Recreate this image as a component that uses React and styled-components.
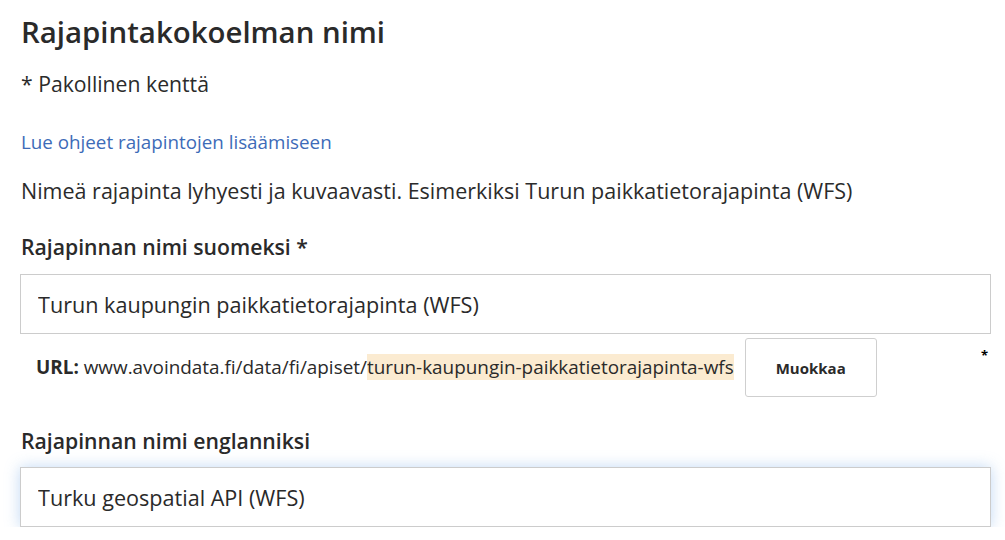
import React from "react";
import styled, { createGlobalStyle } from "styled-components";

const GlobalStyle = createGlobalStyle`
  html, body {
    margin: 0;
    padding: 0;
    background: #FFFFFF;
  }
  body {
    font-family: "Open Sans", Lato, Arial, sans-serif;
    color: #2b2b2b;
  }
`;

const Page = styled.div`
  width: 971px;
  padding: 0 0 0 20px;
  display: flex;
  flex-direction: column;
`;

const Title = styled.h1`
  margin: 13px 0 0 1px;
  font-size: 29.4px;
  line-height: 38px;
  font-weight: 600;
  color: #2a2a2a;
`;

const Required = styled.p`
  margin: 20px 0 0 1px;
  font-size: 21.2px;
  line-height: 26px;
`;

const GuideLink = styled.a`
  margin: 33px 0 0 1px;
  font-size: 18.8px;
  line-height: 24px;
  color: #3d6bb8;
  text-decoration: none;
`;

const Hint = styled.p`
  margin: 24px 0 0 1px;
  font-size: 21.5px;
  line-height: 26px;
`;

const Field = styled.div`
  display: flex;
  flex-direction: column;
  margin-top: ${props => props.top}px;
`;

const Label = styled.label`
  margin-left: 1px;
  font-size: 21.2px;
  line-height: 26px;
  font-weight: 600;
  color: #2a2a2a;
`;

const Input = styled.input`
  box-sizing: border-box;
  margin-top: ${props => props.gap}px;
  width: 971px;
  height: 60px;
  padding: 0 17px;
  border: 1px solid #cccccc;
  border-radius: 0;
  background: #FFFFFF;
  font-family: inherit;
  font-size: 21.6px;
  color: #2a2a2a;
  outline: none;
  box-shadow: ${props => props.focused ? "0 0 14px rgba(120, 170, 230, 0.45)" : "none"};
`;

const UrlRow = styled.div`
  display: flex;
  align-items: flex-start;
  margin-top: 4px;
  padding-left: 16px;
`;

const UrlText = styled.div`
  align-self: center;
  font-size: 18.9px;
  line-height: 27px;
  color: #2a2a2a;
  b {
    font-weight: 700;
  }
`;

const Slug = styled.span`
  background: #fbebd1;
`;

const EditButton = styled.button`
  box-sizing: border-box;
  margin-left: 11px;
  width: 132px;
  height: 59px;
  border: 1px solid #cfcfcf;
  border-radius: 3px;
  background: #FFFFFF;
  font-family: inherit;
  font-size: 15px;
  font-weight: 700;
  color: #2a2a2a;
`;

const Star = styled.span`
  margin-left: auto;
  margin-top: 8px;
  margin-right: 3px;
  font-size: 13px;
  font-weight: 700;
  color: #000000;
`;

export default function App() {
  return (
    <Page>
      <GlobalStyle />
      <Title>Rajapintakokoelman nimi</Title>
      <Required>* Pakollinen kenttä</Required>
      <GuideLink href="#">Lue ohjeet rajapintojen lisäämiseen</GuideLink>
      <Hint>Nimeä rajapinta lyhyesti ja kuvaavasti. Esimerkiksi Turun paikkatietorajapinta (WFS)</Hint>
      <Field top={30}>
        <Label>Rajapinnan nimi suomeksi *</Label>
        <Input gap={14} defaultValue="Turun kaupungin paikkatietorajapinta (WFS)" />
        <UrlRow>
          <UrlText>
            <b>URL:</b> www.avoindata.fi/data/fi/apiset/<Slug>turun-kaupungin-paikkatietorajapinta-wfs</Slug>
          </UrlText>
          <EditButton>Muokkaa</EditButton>
          <Star>*</Star>
        </UrlRow>
      </Field>
      <Field top={31}>
        <Label>Rajapinnan nimi englanniksi</Label>
        <Input gap={13} focused defaultValue="Turku geospatial API (WFS)" />
      </Field>
    </Page>
  );
}
